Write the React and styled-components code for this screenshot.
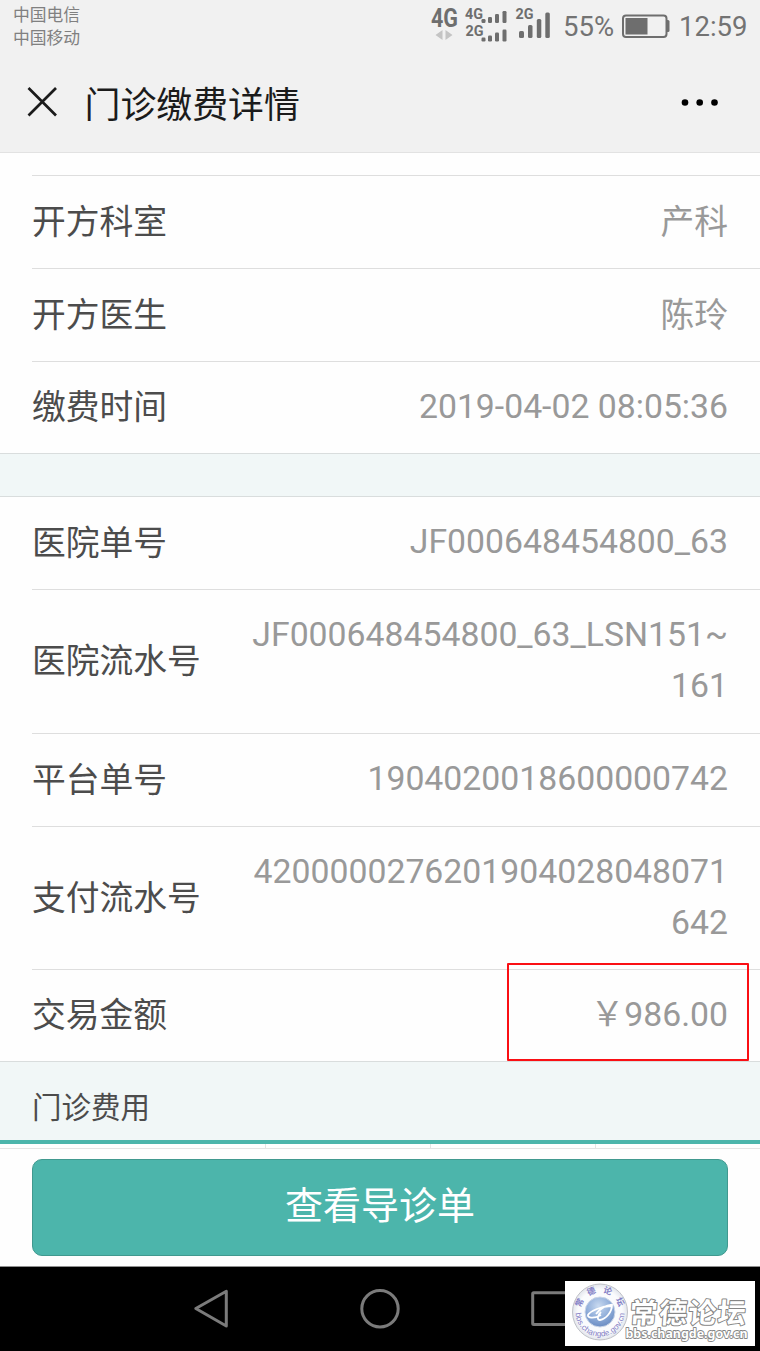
import React from "react";
import styled, { createGlobalStyle } from "styled-components";

const GlobalStyle = createGlobalStyle`
  * {
    box-sizing: border-box;
  }

  body {
    margin: 0;
    background: #fefefe;
    font-family: Roboto, "Noto Sans CJK SC", sans-serif;
  }
`;

const Screen = styled.div`
  position: relative;
  width: 760px;
  height: 1351px;
  display: flex;
  flex-direction: column;
  overflow: hidden;
  background: #fefefe;
`;

//Header
const Header = styled.header`
  height: 153px;
  flex-shrink: 0;
  background: #f1f1f1;
  border-bottom: 1px solid #e2e2e2;
`;

const StatusBar = styled.div`
  height: 53px;
  display: flex;
  justify-content: space-between;
  color: #6e6e6e;
`;

const Carriers = styled.div`
  padding: 4px 0 0 13px;
  font-size: 16.8px;
  line-height: 23px;
  color: #808080;
`;

const StatusRight = styled.div`
  display: flex;
  align-items: flex-start;
  padding-right: 13px;
`;

const StatusText = styled.span`
  width: ${(props) => props.width};
  padding-top: 10px;
  font-size: 27.5px;
  line-height: 33px;
  color: #737373;
  white-space: nowrap;
`;

const TitleBar = styled.div`
  height: 99px;
  display: flex;
  align-items: center;
  padding: 0 41px 0 27px;
`;

const Title = styled.h1`
  flex: 1;
  margin: 0 0 0 26.5px;
  padding-top: 7px;
  color: #1b1b1b;
  font-size: 35.9px;
  font-weight: 400;
  line-height: 54px;
`;

//Detail list
const List = styled.section`
  padding-left: 32px;
  background: #fefefe;
`;

const Row = styled.div`
  height: ${(props) => props.height}px;
  display: flex;
  align-items: center;
  justify-content: space-between;
  padding-right: 32px;
  border-top: ${(props) => (props.first ? "none" : "1px solid #dedede")};
`;

const Label = styled.span`
  padding-top: 2px;
  color: #4c4c4c;
  font-size: 33.78px;
  line-height: 50.67px;
`;

const Value = styled.span`
  max-width: 476px;
  padding: ${(props) => (props.chinese ? "3px 0 0" : "0 0 1px")};
  color: #999999;
  font-size: 33.78px;
  line-height: 50.67px;
  text-align: right;
  word-break: break-all;
`;

const TopSpace = styled.div`
  height: 22px;
  flex-shrink: 0;
`;

const Gap = styled.div`
  height: 44px;
  flex-shrink: 0;
  background: #f1f7f7;
  border-top: 1px solid #d9dddd;
  border-bottom: 1px solid #d9dddd;
`;

const SectionTitle = styled.h2`
  height: 83px;
  flex-shrink: 0;
  margin: 0;
  padding: 24px 0 0 32px;
  background: #f1f7f7;
  border-top: 1px solid #d9dddd;
  border-bottom: 4px solid #4cb5ab;
  color: #4c4c4c;
  font-size: 29.5px;
  font-weight: 400;
  line-height: 44px;
`;

const TableTop = styled.div`
  height: 4px;
  flex-shrink: 0;
  display: grid;
  grid-template-columns: 266px 165px 165px 1fr;
`;

const TableCell = styled.div`
  border-right: 1px solid #e4e4e4;

  &:last-child {
    border-right: none;
  }
`;

//Footer
const Footer = styled.footer`
  height: 119px;
  flex-shrink: 0;
  padding: 10px 32px 0;
  border-top: 1px solid #e4e4e4;
  border-bottom: 1px solid #8f8f8f;
`;

const GuideButton = styled.button`
  width: 100%;
  height: 97px;
  display: block;
  padding: 0 0 10px;
  border: 1px solid #41998f;
  border-radius: 10px;
  background: #4cb5ab;
  color: #ffffff;
  font-family: inherit;
  font-size: 38px;
`;

const NavBar = styled.nav`
  flex: 1;
  background: #000000;
`;

//Overlays
const RedBox = styled.div`
  position: absolute;
  left: 507px;
  top: 963px;
  width: 242px;
  height: 98px;
  border: 2px solid #fa0f14;
  border-radius: 1px;
`;

const Watermark = styled.div`
  position: absolute;
  left: 565px;
  top: 1281px;
  width: 190px;
  height: 65px;
  background: #ffffff;
`;

const payInfo = [
  { label: "开方科室", value: "产科", height: 92, chinese: true },
  { label: "开方医生", value: "陈玲", height: 93, chinese: true },
  { label: "缴费时间", value: "2019-04-02 08:05:36", height: 92 },
];

const orderInfo = [
  { label: "医院单号", value: "JF000648454800_63", height: 92 },
  { label: "医院流水号", value: "JF000648454800_63_LSN151~161", height: 144 },
  { label: "平台单号", value: "1904020018600000742", height: 93 },
  { label: "支付流水号", value: "4200000276201904028048071642", height: 143 },
  { label: "交易金额", value: "￥986.00", height: 92 },
];

const SignalIcons = () => (
  <svg width="133" height="46" viewBox="430 0 133 46" fill="#6e6e6e">
    <g fontFamily="Roboto, sans-serif" fontWeight="700">
      <text x="431" y="27" fontSize="25" textLength="27" lengthAdjust="spacingAndGlyphs">4G</text>
      <text x="465" y="19" fontSize="14" textLength="18" lengthAdjust="spacingAndGlyphs">4G</text>
      <text x="465.5" y="36" fontSize="14" textLength="18" lengthAdjust="spacingAndGlyphs">2G</text>
      <text x="515.5" y="19" fontSize="14" textLength="18" lengthAdjust="spacingAndGlyphs">2G</text>
    </g>
    <path d="M442.5 30v10l-7-5zM445.5 30v10l7-5z" fill="#c4c4c4" />
    <rect x="481.5" y="19" width="4" height="4" rx="1.2" />
    <rect x="488" y="17" width="4" height="6" rx="1.2" />
    <rect x="495" y="14" width="4" height="9" rx="1.2" />
    <rect x="502.5" y="11" width="4" height="12" rx="1.2" />
    <rect x="481.5" y="37.5" width="4" height="4" rx="1.2" />
    <rect x="488" y="35.5" width="4" height="6" rx="1.2" />
    <rect x="495" y="32.5" width="4" height="9" rx="1.2" />
    <rect x="502.5" y="29.5" width="4" height="12" rx="1.2" />
    <rect x="519" y="31" width="5" height="7" rx="1.5" />
    <rect x="528" y="25" width="4.5" height="13" rx="1.5" />
    <rect x="536.8" y="19" width="4.5" height="19" rx="1.5" />
    <rect x="545.3" y="12.5" width="4.5" height="25.5" rx="1.5" />
  </svg>
);

const BatteryIcon = () => (
  <svg width="58" height="46" viewBox="621 0 58 46">
    <rect x="623" y="15.5" width="43.5" height="21.5" rx="3" fill="none" stroke="#6e6e6e" strokeWidth="2" />
    <rect x="625.5" y="18" width="22" height="16.5" fill="#6e6e6e" />
    <path d="M667 20h1q1.5 0 1.5 1.5v9q0 1.5-1.5 1.5h-1z" fill="#6e6e6e" />
  </svg>
);

const CloseIcon = () => (
  <svg width="31" height="31" viewBox="0 0 31 31">
    <path d="M1.5 1l27.5 27.5M29 1L1.5 28.5" stroke="#1b1b1b" strokeWidth="2.7" />
  </svg>
);

const MoreIcon = () => (
  <svg width="38" height="8" viewBox="0 0 38 8" fill="#000000">
    <circle cx="4" cy="3.5" r="3.3" />
    <circle cx="18.7" cy="3.5" r="3.3" />
    <circle cx="33.5" cy="3.5" r="3.3" />
  </svg>
);

const NavIcons = () => (
  <svg width="760" height="84" viewBox="0 1267 760 84" fill="none" stroke="#7b7b7b" strokeWidth="3" strokeLinejoin="round">
    <path d="M195.8 1308.5L226.3 1291.3V1326Z" />
    <circle cx="380" cy="1308.8" r="18.2" />
    <rect x="532.7" y="1292.7" width="34" height="31.8" rx="1" />
  </svg>
);

const ForumLogo = () => (
  <svg width="190" height="65" viewBox="0 0 190 65">
    <defs>
      <radialGradient id="globe" cx="45%" cy="30%" r="75%">
        <stop offset="0" stopColor="#c9daf0" />
        <stop offset="0.55" stopColor="#8fadd9" />
        <stop offset="1" stopColor="#6587bf" />
      </radialGradient>
      <radialGradient id="ring">
        <stop offset="0.8" stopColor="#fafbfd" />
        <stop offset="1" stopColor="#e2e5ec" />
      </radialGradient>
      <path id="ringTop" d="M15.5 31A19.5 19.5 0 0 1 54.5 31" />
      <path id="ringBottom" d="M10.5 31A24.5 24.5 0 0 0 59.5 31" />
    </defs>
    <ellipse cx="35" cy="31" rx="27.5" ry="28" fill="url(#ring)" stroke="#bfc1c7" />
    <circle cx="35" cy="31" r="15" fill="url(#globe)" stroke="#cbd6e8" />
    <path
      d="M46 25C37 25 25 30 23 34C22 37 29 38 36 34M31 33C35 28 42 23 47 24C47 31 41 38 35 39C32 39 32 35 36 31"
      fill="none"
      stroke="#ffffff"
      strokeWidth="1.8"
    />
    <g fill="#837fc5" fontWeight="700">
      <text fontFamily="'Noto Sans CJK SC', sans-serif" fontSize="8.5">
        <textPath href="#ringTop" startOffset="4" textLength="52">常德论坛</textPath>
      </text>
      <text fontFamily="'Liberation Sans', sans-serif" fontSize="8" fontWeight="400">
        <textPath href="#ringBottom" startOffset="1" textLength="74">bbs.changde.gov.cn</textPath>
      </text>
    </g>
    <g fill="#ffffff" stroke="#858585" strokeLinejoin="round" paintOrder="stroke">
      <text
        x="64"
        y="42"
        fontFamily="'Noto Sans CJK SC', sans-serif"
        fontSize="28"
        fontWeight="700"
        strokeWidth="2"
        textLength="116"
        transform="skewX(-4) translate(3 0)"
      >
        常德论坛
      </text>
      <text
        x="60.5"
        y="57"
        fontFamily="'Noto Sans', sans-serif"
        fontSize="13"
        fontWeight="700"
        strokeWidth="1.8"
        textLength="122"
        lengthAdjust="spacingAndGlyphs"
      >
        bbs.changde.gov.cn
      </text>
    </g>
  </svg>
);

const InfoList = ({ items }) => (
  <List>
    {items.map((item, i) => (
      <Row key={item.label} height={item.height} first={i === 0 ? 1 : 0}>
        <Label>{item.label}</Label>
        <Value chinese={item.chinese ? 1 : 0}>{item.value}</Value>
      </Row>
    ))}
  </List>
);

const TopLine = styled.div`
  height: 1px;
  flex-shrink: 0;
  margin-left: 32px;
  background: #dedede;
`;

const App = () => {
  return (
    <>
      <GlobalStyle />
      <Screen>
        <Header>
          <StatusBar>
            <Carriers>
              中国电信
              <br />
              中国移动
            </Carriers>
            <StatusRight>
              <SignalIcons />
              <StatusText width="58px">55%</StatusText>
              <BatteryIcon />
              <StatusText width="68px">12:59</StatusText>
            </StatusRight>
          </StatusBar>
          <TitleBar>
            <CloseIcon />
            <Title>门诊缴费详情</Title>
            <MoreIcon />
          </TitleBar>
        </Header>
        <TopSpace />
        <TopLine />
        <InfoList items={payInfo} />
        <Gap />
        <InfoList items={orderInfo} />
        <SectionTitle>门诊费用</SectionTitle>
        <TableTop>
          <TableCell />
          <TableCell />
          <TableCell />
          <TableCell />
        </TableTop>
        <Footer>
          <GuideButton>查看导诊单</GuideButton>
        </Footer>
        <NavBar>
          <NavIcons />
        </NavBar>
        <RedBox />
        <Watermark>
          <ForumLogo />
        </Watermark>
      </Screen>
    </>
  );
};

export default App;
